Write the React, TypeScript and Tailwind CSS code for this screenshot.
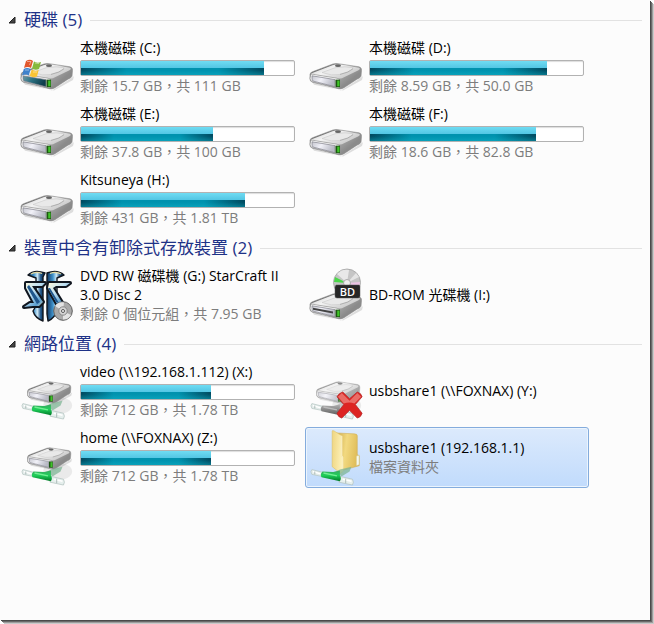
import { useId } from "react";
import type { ReactNode } from "react";

type TileProps = {
  icon: ReactNode;
  name: string;
  detail?: string;
  used?: number;
  selected?: boolean;
};

function DriveBody({ slot = false, tinted = false }: { slot?: boolean; tinted?: boolean }) {
  const id = useId();
  return (
    <g>
      <defs>
        <linearGradient id={id + "top"} x1="0" y1="0" x2="1" y2="0.6">
          <stop offset="0" stopColor="#c4c4c4" />
          <stop offset="0.45" stopColor="#f4f4f4" />
          <stop offset="1" stopColor="#c6c6c6" />
        </linearGradient>
        <linearGradient id={id + "side"} x1="0.5" y1="0" x2="1" y2="0.3">
          <stop offset="0" stopColor="#707070" />
          <stop offset="0.35" stopColor="#d6d6d6" />
          <stop offset="0.6" stopColor="#a2a2a2" />
          <stop offset="1" stopColor="#8a8a8a" />
        </linearGradient>
        <linearGradient id={id + "front"} x1="0" y1="0" x2="1" y2="0.3">
          <stop offset="0" stopColor={tinted ? "#6f9aa6" : "#c6c7cf"} />
          <stop offset="0.45" stopColor={tinted ? "#2b7182" : "#f1f1f8"} />
          <stop offset="1" stopColor={tinted ? "#0f3f4c" : "#b9bac5"} />
        </linearGradient>
      </defs>
      <path d="M3 20 32 29 54 14 53 18 34 29 5 23Z" fill="#000" opacity="0.12" />
      <path d="M1 12Q1 10 4 9L24 1Q27 0 31 1L50 4Q53 5 52.500 8L52 14Q51 16 48 17L35 26Q32 28 29 27L3 20Q1 19 1 17Z" fill={`url(#${id}side)`} stroke="#8c8c8c" strokeWidth="0.6" />
      <path d="M2 11 24 2Q27 1 31 1.500L50 5Q52 6 49 8L35 15Q32 17 29 16L3 12Z" fill={`url(#${id}top)`} />
      <path d="M13 10 26 5Q37 3 44 5Q45 8 32 12Q22 14 13 10" fill="#e9e9e9" stroke="#c6c6c6" strokeWidth="0.6" />
      <path d="M31 12Q40 10 44 6" fill="none" stroke="#a2a2a2" strokeWidth="0.8" />
      <ellipse cx="29" cy="2.800" rx="3" ry="1.400" fill="#666" />
      <path d="M2 11.500 28 16Q31 16.500 31 19L31 24Q31 27 28 26L4 20Q1 19 1 16Z" fill="#f7f7f7" stroke="#959595" strokeWidth="0.7" />
      <path d="M3 13.500 26 17.500V25L4 19Q3 18 3 16Z" fill={`url(#${id}front)`} stroke="#7c7c86" strokeWidth="0.7" />
      {slot && <path d="M4 15.500 24 19.500V21.500L4 17.500Z" fill="#444" />}
      <path d="M26.500 17.500H31V25.500H26.500Z" fill="#1d5513" />
      <path d="M28.200 18.500H30.500V24.500H28.200Z" fill="#3fc428" />
    </g>
  );
}

function DriveIcon() {
  return (
    <svg className="h-14 w-14" viewBox="0 0 56 56" aria-hidden="true">
      <g transform="translate(0 23) scale(1 0.95)">
        <DriveBody />
      </g>
    </svg>
  );
}

function SystemDriveIcon() {
  return (
    <svg className="h-14 w-14" viewBox="0 0 56 56" aria-hidden="true">
      <g transform="translate(0 23) scale(1 0.95)">
        <DriveBody tinted />
      </g>
      <g transform="translate(1 1)">
        <path d="M5 20Q9 17.500 12 20L10 27Q7 25 3 27Z" fill="#e2572c" />
        <path d="M13 20.500Q16 22.500 20 21L18 28Q14 29.500 11 27.500Z" fill="#86b93d" />
        <path d="M2.800 28Q6 26 9.700 28L7.700 34.500Q5 32.500 1 34.500Z" fill="#3f82cc" />
        <path d="M10.700 28.500Q14 30.500 17.700 29L16 35.500Q12 37 8.700 35Z" fill="#f8c435" />
        <path d="M6 20.500 10 20.500 8.500 24M14 22 18 22.500M4 29H8M12 31H16" fill="none" stroke="#fff" strokeWidth="1" opacity="0.45" />
      </g>
    </svg>
  );
}

function NetworkPipe({ online = true }: { online?: boolean }) {
  const id = useId();
  return (
    <g>
      <defs>
        <linearGradient id={id} x1="0" y1="0" x2="0" y2="1">
          <stop offset="0" stopColor={online ? "#3ba862" : "#b0b0b0"} />
          <stop offset="0.45" stopColor={online ? "#1fd05a" : "#8b8b8b"} />
          <stop offset="1" stopColor={online ? "#007a28" : "#5e5e5e"} />
        </linearGradient>
      </defs>
      <path d="M25 44 31 41 43 38 41 43 33 48Z" fill={online ? "#7fb696" : "#bbb"} opacity="0.75" />
      <path d="M2 41Q0 43 2 46L12 48 14 44Z" fill="#e3ecea" stroke="#b2c2bf" strokeWidth="0.7" />
      <path d="M31 48 44 51Q46 54 44 57L30 54Z" fill="#e6efed" stroke="#aebebb" strokeWidth="0.7" />
      <path d="M13 43 24 43.500 31 42 31 47Q33 50 31 53L12 49Q10 46 13 43Z" fill={`url(#${id})`} />
      <path d="M14 44.500 28 47.500" fill="none" stroke={online ? "#71f092" : "#bbb"} strokeWidth="1.500" />
      <path d="M3 43 11 45.500M34 51 43 53" stroke="#fff" strokeWidth="1.500" />
      <path d="M5 43V46M37 50.500V55" stroke="#98aaa7" strokeWidth="0.800" />
    </g>
  );
}

function NetworkDriveIcon({ online = true }: { online?: boolean }) {
  return (
    <svg className="h-14 w-14" viewBox="0 0 56 58" aria-hidden="true">
      <ellipse cx="38" cy="43" rx="15" ry="9" fill="#000" opacity="0.07" />
      <g transform="translate(6 18) scale(0.87 0.83)" opacity={online ? 1 : 0.75}>
        <DriveBody />
      </g>
      <NetworkPipe online={online} />
      {!online && (
        <g>
          <path d="M28 34Q30 30 34 29L41 36 49 29Q53 30 54 34L47 42 54 51Q53 55 49 56L41 48 33 56Q29 55 28 51L35 42Z" fill="#dd2422" stroke="#b3292b" strokeWidth="0.8" />
          <path d="M29 34 33 30 41 38 49 30 53 34 46 41Q41 39 35 41Z" fill="#ea6c66" />
        </g>
      )}
    </svg>
  );
}

function NetworkFolderIcon() {
  const id = useId();
  return (
    <svg className="h-14 w-14" viewBox="0 0 56 58" aria-hidden="true">
      <defs>
        <linearGradient id={id + "back"} x1="0" y1="0" x2="1" y2="0.2">
          <stop offset="0" stopColor="#c9a441" />
          <stop offset="0.5" stopColor="#f2d980" />
          <stop offset="1" stopColor="#dfbc58" />
        </linearGradient>
        <linearGradient id={id + "flap"} x1="0" y1="0" x2="1" y2="0.2">
          <stop offset="0" stopColor="#efd57f" />
          <stop offset="1" stopColor="#fcf0b8" />
        </linearGradient>
      </defs>
      <path d="M26 3 46 4Q49 4 49 6V25L51 27V37L33 42Z" fill={`url(#${id}back)`} stroke="#cfb05c" strokeWidth="0.6" />
      <path d="M48 27 51 26V36L48 37Z" fill="#f4f8ee" stroke="#d4bc6c" strokeWidth="0.5" />
      <path d="M23 1Q23 0 25 1L33 6V27L34 28V43L32 45 23 38Z" fill={`url(#${id}flap)`} stroke="#dcc06a" strokeWidth="0.6" />
      <path d="M33 6V27L34 28V43" fill="none" stroke="#fff7d2" strokeWidth="1" />
      <NetworkPipe />
    </svg>
  );
}

function StarCraftIcon() {
  const id = useId();
  const letters = (
    <g>
      <path d="M6 15H25L22 18H12L23 34 19 38H13L4 39 10 35H14L6 20Z" />
      <path d="M29 15H50L46 18H36L33 20 43 36H37L28 20Z" />
    </g>
  );
  return (
    <svg className="h-14 w-14" viewBox="0 0 56 56" aria-hidden="true">
      <defs>
        <linearGradient id={id + "pillar"} x1="0" y1="0" x2="1" y2="0">
          <stop offset="0" stopColor="#0f3460" />
          <stop offset="0.35" stopColor="#3f93cc" />
          <stop offset="0.55" stopColor="#cfe9f6" />
          <stop offset="0.75" stopColor="#1e5488" />
          <stop offset="1" stopColor="#0b2038" />
        </linearGradient>
        <linearGradient id={id + "letter"} x1="0" y1="0" x2="1" y2="1">
          <stop offset="0" stopColor="#fdf8dc" />
          <stop offset="0.4" stopColor="#bfe0f2" />
          <stop offset="0.75" stopColor="#5a9ed0" />
          <stop offset="1" stopColor="#e8e2b8" />
        </linearGradient>
      </defs>
      <g fill={`url(#${id}pillar)`} stroke="#10161f" strokeWidth="1.4" strokeLinejoin="round">
        <path d="M8 7Q14 1 25 5L23 9V53Q15 50 13 43L16 38V10Z" />
        <path d="M27 5Q37 1 44 7L37 10V42Q35 50 28 53L27 46Z" />
      </g>
      <path d="M11 6Q16 3 22 5.500M30 5.500Q36 3 41 6" fill="none" stroke="#e3d9a2" strokeWidth="1.200" />
      <g fill="#10161f" stroke="#10161f" strokeWidth="4" strokeLinejoin="round">{letters}</g>
      <g fill={`url(#${id}letter)`}>{letters}</g>
      <path d="M9 17 20 34 17 36 7 19ZM30 20 39 35 36 34 28 20Z" fill="#1f568c" />
      <circle cx="43" cy="43" r="9.300" fill="#a9a9a9" stroke="#5f5f5f" />
      <path d="M43 43 35 38A9 9 0 0 1 44 34.500ZM43 43 51 47A9 9 0 0 1 43 51.500Z" fill="#e3e3e3" />
      <circle cx="43" cy="43" r="4.200" fill="#d5d5d5" stroke="#888" />
      <circle cx="43" cy="43" r="1.500" fill="#fff" stroke="#555" />
    </svg>
  );
}

function BluRayIcon() {
  return (
    <svg className="h-14 w-14" viewBox="0 0 56 56" aria-hidden="true">
      <g transform="translate(0 25) scale(1 0.95)">
        <DriveBody slot />
      </g>
      <circle cx="38" cy="14.500" r="13.500" fill="#c5c5c5" stroke="#a2a2a2" strokeWidth="0.8" />
      <path d="M38 15 28 6A13 13 0 0 1 40 2Z" fill="#e8e8e8" />
      <path d="M38 15 26 9 25 14Z" fill="#4cd84a" />
      <path d="M38 15 51 14 50 20Z" fill="#ecc4e4" />
      <path d="M38 15 47 5 50 9Z" fill="#e4e4e4" />
      <circle cx="38" cy="15" r="3.500" fill="#eee" stroke="#aaa" />
      <path d="M27 17H50Q51 17 51 19V28Q51 30 49 30H28Q26 30 26 28V19Z" fill="#262626" stroke="#555" strokeWidth="0.5" />
      <text x="38.500" y="28" fill="#fff" fontSize="11" fontWeight="600" textAnchor="middle" fontFamily="Open Sans">BD</text>
    </svg>
  );
}

function UsageBar({ used, label }: { used: number; label: string }) {
  return (
    <div
      role="progressbar"
      aria-label={label}
      aria-valuenow={used}
      className="mt-[3px] h-4 rounded-xs border border-[#b2b2b2] bg-white shadow-[inset_0_1px_1px_#ddd]"
    >
      <div
        className="flex h-full flex-col bg-linear-to-b from-[#6fdcf3] to-[#2fafd4]"
        style={{ width: `${used}%` }}
      >
        <div className="mt-auto h-[7px] bg-[linear-gradient(to_bottom,transparent_30%,#14b8cc66),linear-gradient(to_right,#004a60,#0092ae_25%,#0092ae_75%,#004a60)]" />
      </div>
    </div>
  );
}

function Tile({ icon, name, detail, used, selected }: TileProps) {
  return (
    <li>
      <button
        type="button"
        aria-pressed={!!selected}
        className={
          "flex min-h-[61px] w-full items-center gap-1 rounded-[3px] border pr-1 pl-[3px] text-left " +
          (selected
            ? "border-[#84acdd] bg-linear-to-b from-[#dceafc] to-[#c1dbfc] shadow-[inset_0_0_0_1px_#ebf4fd]"
            : "border-transparent")
        }
      >
        <span className="shrink-0">{icon}</span>
        <div className="min-w-0 flex-1 pb-[2px] text-[14px] leading-[19px]">
          <div className="text-black">{name}</div>
          {used !== undefined && <UsageBar used={used} label={name} />}
          {detail && <div className="text-[#7d7d7d]">{detail}</div>}
        </div>
      </button>
    </li>
  );
}

function Section({ title, children }: { title: string; children: ReactNode }) {
  return (
    <section className="pb-px">
      <h2 className="flex h-[34px] items-center pr-2 pl-2 text-[17px] text-[#1e3287]">
        <button type="button" className="flex items-center gap-2">
          <svg className="h-2 w-2" viewBox="0 0 8 8" aria-hidden="true">
            <path d="M7 1V7H1Z" fill="#444" stroke="#222" />
          </svg>
          {title}
        </button>
        <span className="ml-2 h-px flex-1 bg-[#e2e2e2]" />
      </h2>
      <ul className="grid grid-cols-[repeat(auto-fill,284px)] gap-x-[5px] gap-y-[5px] pl-4">{children}</ul>
    </section>
  );
}

export default function App() {
  return (
    <div className="min-h-screen bg-white pr-1 pb-1 font-['Open_Sans','Noto_Sans_CJK_TC',sans-serif]">
      <main className="min-h-[calc(100vh-4px)] bg-[#fcfcfc] pt-[3px] shadow-[1px_1px_0_#4a4a4a,2px_2px_0_#6a6a6a,3px_3px_0_#9c9c9c,4px_4px_0_#cacaca]">
        <Section title="硬碟 (5)">
          <Tile icon={<SystemDriveIcon />} name="本機磁碟 (C:)" detail="剩餘 15.7 GB，共 111 GB" used={86} />
          <Tile icon={<DriveIcon />} name="本機磁碟 (D:)" detail="剩餘 8.59 GB，共 50.0 GB" used={83} />
          <Tile icon={<DriveIcon />} name="本機磁碟 (E:)" detail="剩餘 37.8 GB，共 100 GB" used={62} />
          <Tile icon={<DriveIcon />} name="本機磁碟 (F:)" detail="剩餘 18.6 GB，共 82.8 GB" used={78} />
          <Tile icon={<DriveIcon />} name="Kitsuneya (H:)" detail="剩餘 431 GB，共 1.81 TB" used={77} />
        </Section>
        <Section title="裝置中含有卸除式存放裝置 (2)">
          <Tile icon={<StarCraftIcon />} name="DVD RW 磁碟機 (G:) StarCraft II 3.0 Disc 2" detail="剩餘 0 個位元組，共 7.95 GB" />
          <Tile icon={<BluRayIcon />} name="BD-ROM 光碟機 (I:)" />
        </Section>
        <Section title="網路位置 (4)">
          <Tile icon={<NetworkDriveIcon />} name="video (\\192.168.1.112) (X:)" detail="剩餘 712 GB，共 1.78 TB" used={61} />
          <Tile icon={<NetworkDriveIcon online={false} />} name="usbshare1 (\\FOXNAX) (Y:)" />
          <Tile icon={<NetworkDriveIcon />} name="home (\\FOXNAX) (Z:)" detail="剩餘 712 GB，共 1.78 TB" used={61} />
          <Tile icon={<NetworkFolderIcon />} name="usbshare1 (192.168.1.1)" detail="檔案資料夾" selected />
        </Section>
      </main>
    </div>
  );
}
